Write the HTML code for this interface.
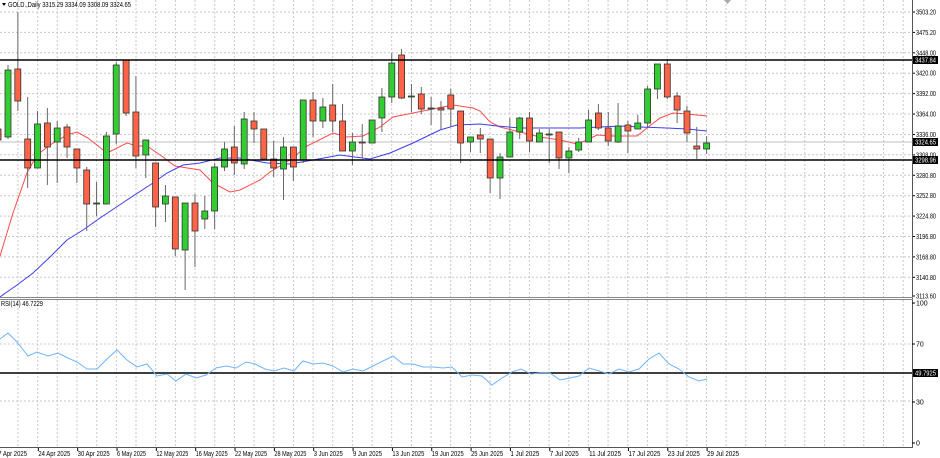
<!DOCTYPE html>
<html><head><meta charset="utf-8"><style>
html,body{margin:0;padding:0;background:#fff;width:940px;height:458px;overflow:hidden}
svg{display:block}
text{font-family:"Liberation Sans",sans-serif;font-size:7px;fill:#000}
</style></head><body>
<svg id="s" width="940" height="458" xmlns="http://www.w3.org/2000/svg"></svg>
<script>
const S=document.getElementById('s');let h='';
// grid
for(let k=0;k<47;k++){const x=(18+19.67*k).toFixed(1);if(x>910)break;
h+=`<line x1="${x}" y1="0" x2="${x}" y2="297" stroke="#c8c8c8" stroke-width="1" stroke-dasharray="2,2"/>`;
h+=`<line x1="${x}" y1="300" x2="${x}" y2="447" stroke="#c8c8c8" stroke-width="1" stroke-dasharray="2,2"/>`;}
const pl=[["3503.20",12],["3475.20",32.4],["3448.00",52.8],["3420.00",73.2],["3392.00",93.6],["3364.00",114],["3336.00",134.5],["3308.00",154.9],["3280.80",175.3],["3252.80",195.7],["3224.80",216.1],["3196.80",236.5],["3168.80",256.9],["3140.80",277.3],["3113.60",296]];
pl.forEach(([t,y],i)=>{if(i<14)h+=`<line x1="0" y1="${y}" x2="912" y2="${y}" stroke="#c8c8c8" stroke-dasharray="2,2"/>`;
h+=`<line x1="912" y1="${y}" x2="915" y2="${y}" stroke="#000"/><text x="916" y="${y+2.5}" textLength="20" lengthAdjust="spacingAndGlyphs">${t}</text>`;});
[344,401].forEach(y=>h+=`<line x1="0" y1="${y}" x2="912" y2="${y}" stroke="#c8c8c8" stroke-dasharray="2,2"/>`);
// current price grey line
h+=`<line x1="0" y1="142" x2="912" y2="142" stroke="#c0c0c0"/>`;
// MAs
const red=[[0,256],[13,213],[27,173],[37,155],[50,145],[67,135],[77,132],[88,138],[107,153],[127,143],[137,146],[147,146],[163,157],[175,166],[200,170],[213,183],[230,192],[240,190],[260,180],[270,172],[290,160],[307,146],[333,133],[347,137],[363,136],[380,127],[393,117],[413,113],[433,109],[453,105],[473,108],[480,111],[490,122],[500,127],[520,132],[540,137],[560,140],[577,144],[587,140],[597,135],[613,136],[637,136],[647,128],[660,118],[673,113],[687,114],[707,116]];
const blue=[[0,297],[7,292],[17,285],[33,273],[50,257],[67,240],[83,230],[100,218],[127,200],[153,183],[167,173],[183,165],[200,163],[220,158],[240,158],[267,163],[290,164],[313,160],[340,155],[370,159],[390,153],[413,143],[440,130],[457,125],[480,124],[497,126],[520,128],[547,128],[580,128],[620,126],[640,127],[667,128],[687,129],[707,131]];
h+=`<polyline points="${red.join(' ')}" fill="none" stroke="#ff4a4a" stroke-width="1"/>`;
h+=`<polyline points="${blue.join(' ')}" fill="none" stroke="#3c3cf0" stroke-width="1"/>`;
// candles
const C=[[70,137,65,139,'g'],[69,101,12,111,'r'],[139,168,97,188,'r'],[124,168,111,168,'g'],[123,147,108,185,'r'],[128,142,121,183,'g'],[127,147,124,158,'r'],[149,168,149,183,'r'],[170,204,167,231,'r'],[203,204,182,216,'g'],[136,204,132,204,'g'],[65,134,62,144,'g'],[60,113,60,116,'r'],[112,156,76,168,'r'],[140,155,140,178,'g'],[163,207,163,227,'r'],[196,204,185,222,'g'],[197,249,197,256,'r'],[203,250,203,290,'g'],[203,231,194,267,'r'],[211,219,196,229,'g'],[167,211,163,229,'g'],[149,167,142,171,'g'],[147,163,126,175,'r'],[119,164,112,169,'g'],[121,129,112,143,'r'],[129,159,129,159,'r'],[159,168,141,177,'r'],[147,169,137,200,'g'],[147,167,147,181,'r'],[100,160,100,163,'g'],[100,121,92,137,'r'],[107,121,98,128,'g'],[105,121,84,132,'r'],[121,151,104,151,'r'],[142,151,133,165,'g'],[142,143,124,158,'r'],[120,143,120,143,'g'],[97,118,88,132,'g'],[63,97,53,103,'g'],[55,98,49,99,'r'],[96,97,84,112,'g'],[94,109,87,114,'r'],[108,109,97,125,'g'],[108,110,101,130,'r'],[95,109,89,127,'r'],[111,143,111,163,'r'],[137,142,137,152,'g'],[135,139,128,153,'r'],[139,178,139,193,'r'],[157,178,153,199,'g'],[132,157,118,157,'g'],[118,132,117,139,'g'],[118,141,112,152,'r'],[133,142,129,142,'g'],[134,135,129,163,'g'],[132,158,132,169,'r'],[151,158,147,173,'g'],[142,150,138,152,'g'],[120,142,110,142,'g'],[113,128,104,130,'r'],[128,141,112,146,'r'],[126,142,103,143,'g'],[125,131,121,153,'r'],[123,129,115,129,'g'],[89,123,86,127,'g'],[64,89,64,99,'g'],[64,97,59,99,'r'],[96,110,92,123,'r'],[111,133,106,142,'r'],[146,149,127,159,'r'],[143,149,136,154,'g']];
C.forEach((c,i)=>{const x=8+9.84*i;const [t,b,hi,lo,col]=c;
h+=`<line x1="${x}" y1="${hi}" x2="${x}" y2="${lo}" stroke="#666" stroke-width="1"/>`;
h+=`<rect x="${(x-3).toFixed(1)}" y="${t}" width="6" height="${Math.max(b-t,1)}" fill="${col=='g'?'#32cd32':'#ff6347'}" stroke="#333" stroke-width="0.8"/>`;});
// partial candle at left edge
h+=`<rect x="-4" y="129" width="5" height="11" fill="#ff6347" stroke="#333" stroke-width="0.8"/>`;
// horizontal levels
h+=`<line x1="0" y1="60" x2="912" y2="60" stroke="#000" stroke-width="1.5"/><line x1="0" y1="160" x2="912" y2="160" stroke="#000" stroke-width="1.5"/><line x1="0" y1="373" x2="912" y2="373" stroke="#000" stroke-width="1.5"/>`;
// RSI
const rsi=[[0,339],[8,333],[17,342],[28,356],[37,352],[48,356],[58,353],[68,358],[77,362],[87,369],[97,369],[107,359],[117,350],[127,360],[137,367],[147,364],[157,376],[167,374],[176,381],[186,374],[196,378],[206,375],[216,368],[226,366],[236,368],[246,362],[255,364],[265,369],[274,371],[284,368],[294,371],[300,364],[303,361],[313,364],[323,363],[333,366],[343,372],[353,369],[363,371],[373,366],[383,361],[393,356],[403,364],[413,364],[423,367],[433,367],[443,368],[452,367],[462,377],[472,375],[482,376],[492,385],[502,378],[512,372],[521,369],[531,374],[540,373],[550,373],[560,380],[570,378],[579,376],[589,368],[599,371],[609,374],[619,369],[629,372],[639,369],[649,359],[659,353],[669,364],[679,369],[689,377],[699,381],[707,379]];
h+=`<polyline points="${rsi.join(' ')}" fill="none" stroke="#6eb4ff" stroke-width="1"/>`;
// frame
h+=`<line x1="912.5" y1="0" x2="912.5" y2="448" stroke="#555"/>`;
h+=`<line x1="0" y1="297.5" x2="913" y2="297.5" stroke="#888"/><line x1="0" y1="299.5" x2="913" y2="299.5" stroke="#888"/>`;
h+=`<line x1="0" y1="447.5" x2="913" y2="447.5" stroke="#555"/>`;
// RSI labels
[["100",303],["70",344],["30",402],["0",443]].forEach(([t,y])=>h+=`<line x1="912" y1="${y}" x2="915" y2="${y}" stroke="#000"/><text x="916" y="${y+2.5}">${t}</text>`);
// highlighted labels
[["3437.84",60],["3324.65",142],["3298.96",160],["49.7925",373]].forEach(([t,y])=>h+=`<rect x="913" y="${y-4}" width="25" height="8" fill="#000"/><text x="915" y="${y+2.5}" textLength="21" lengthAdjust="spacingAndGlyphs" style="fill:#fff">${t}</text>`);
// header
h+=`<path d="M2 3 L6 3 L4 6 Z" fill="#000"/><text x="8" y="7" textLength="123" lengthAdjust="spacingAndGlyphs">GOLD.,Daily  3315.29 3334.09 3308.09 3324.65</text>`;
h+=`<text x="1" y="306" textLength="42" lengthAdjust="spacingAndGlyphs">RSI(14) 46.7229</text>`;
h+=`<path d="M724 0 L731 0 L727.5 4 Z" fill="#aaa"/>`;
// date labels
const d=["17 Apr 2025","24 Apr 2025","30 Apr 2025","6 May 2025","12 May 2025","16 May 2025","22 May 2025","28 May 2025","3 Jun 2025","9 Jun 2025","13 Jun 2025","19 Jun 2025","25 Jun 2025","1 Jul 2025","7 Jul 2025","11 Jul 2025","17 Jul 2025","23 Jul 2025","29 Jul 2025"];
d.forEach((t,i)=>{const x=-2+39.34*i;const w=t.length==11?32:29;
h+=`<line x1="${x+1}" y1="448" x2="${x+1}" y2="451" stroke="#000"/><text x="${i==0?-5:x+1}" y="456" textLength="${w}" lengthAdjust="spacingAndGlyphs">${t}</text>`;});
S.innerHTML=h;
</script>
</body></html>
